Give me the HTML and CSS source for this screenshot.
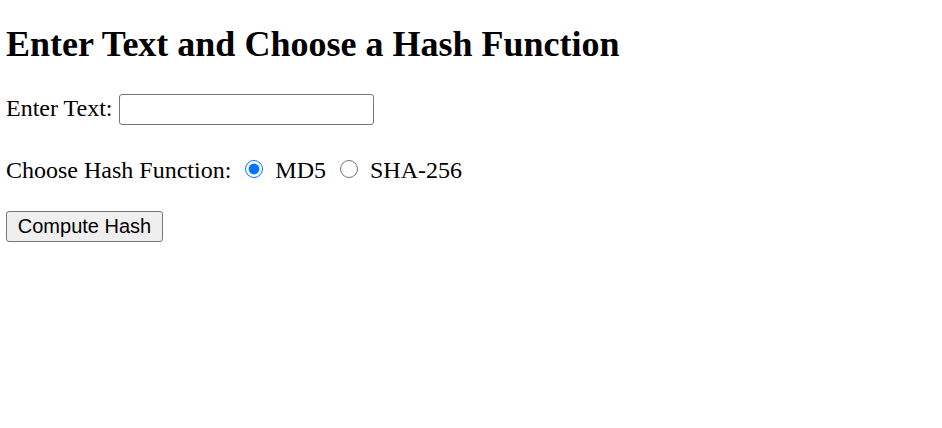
FILE: index.html
```html
<!DOCTYPE html>
<html lang="en">
<head>
<meta charset="utf-8">
<title>Hash Function</title>
<link rel="stylesheet" href="styles.css">
</head>
<body>
<h1 class="title">Enter Text and Choose a Hash Function</h1>
<form class="hash-form">
  <p class="row row-text"><label for="txt">Enter Text:</label> <input class="text-input" type="text" id="txt"></p>
  <p class="row row-radio">Choose Hash Function: <input class="radio" type="radio" name="alg" id="md5" checked> <label for="md5">MD5</label> <input class="radio" type="radio" name="alg" id="sha"> <label for="sha">SHA-256</label></p>
  <p class="row row-btn"><button class="btn" type="button">Compute Hash</button></p>
</form>
</body>
</html>
```

FILE: styles.css
```css
html, body {
  background: #ffffff;
}
body {
  margin: 0;
  padding: 0 6px;
  font-family: "Liberation Serif", "Times New Roman", serif;
  font-size: 24px;
  color: #000000;
}
.title {
  font-size: 36px;
  font-weight: bold;
  margin: 24px 0 0;
  line-height: 41px;
}
.hash-form {
  margin: 0;
}
.row {
  margin: 0;
}
.row-text {
  margin-top: 29px;
}
.row-radio {
  margin-top: 31px;
}
.row-btn {
  margin-top: 27px;
}
.text-input {
  box-sizing: border-box;
  width: 255px;
  height: 31px;
  border: 1px solid #767676;
  border-radius: 3px;
  padding: 1px 3px;
  font-family: "Liberation Sans", Arial, sans-serif;
  font-size: 20px;
  margin: 0;
  vertical-align: baseline;
}
.radio {
  width: 18px;
  height: 18px;
  margin: 4px 6px 0 8px;
  accent-color: #0075ff;
}
.btn {
  box-sizing: border-box;
  width: 157px;
  height: 31px;
  padding: 1px 0;
  border: 1px solid #767676;
  border-radius: 3px;
  background: #efefef;
  font-family: "Liberation Sans", Arial, sans-serif;
  font-size: 20px;
  color: #000000;
  margin: 0;
  text-align: center;
}
```
